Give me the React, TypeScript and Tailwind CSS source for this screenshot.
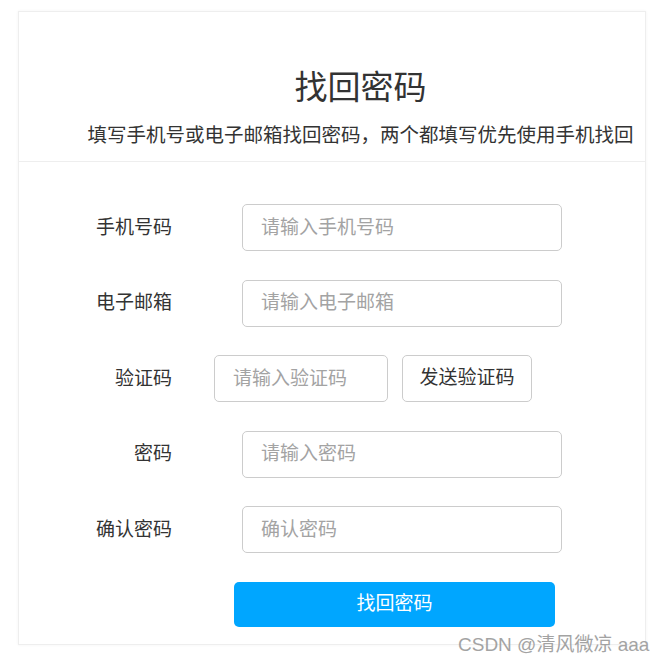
import React from "react";

const fields = [
  { label: "手机号码", placeholder: "请输入手机号码", type: "text" },
  { label: "电子邮箱", placeholder: "请输入电子邮箱", type: "text" },
];

const passFields = [
  { label: "密码", placeholder: "请输入密码", type: "password" },
  { label: "确认密码", placeholder: "确认密码", type: "password" },
];

function Field({ label, placeholder, type }: { label: string; placeholder: string; type: string }) {
  return (
    <div className="flex items-center">
      <label className="w-[100px] text-right text-[19px] leading-[26px] text-[#333]">{label}</label>
      <input
        type={type}
        placeholder={placeholder}
        className="ml-[70px] h-[47px] w-[320px] rounded-[5px] border border-[#cccccc] bg-white px-[18px] text-[19px] text-[#333] outline-none placeholder:text-[#a3a3a3]"
      />
    </div>
  );
}

export default function App() {
  return (
    <div className="relative min-h-[654px] w-full bg-white font-['Liberation_Sans','Noto_Sans_CJK_SC',sans-serif]">
      <div className="ml-[18px] mt-[11px] h-[634px] w-[628px] border border-[#eeeeee] bg-white shadow-[0_0_3px_rgba(0,0,0,0.05)]">
        <div className="flex flex-col items-center border-b border-[#eeeeee] pb-[12px] pl-[57px] pt-[56px]">
          <h1 className="text-[33px] leading-[40px] text-[#333]">找回密码</h1>
          <p className="mt-[13px] text-[19.5px] leading-[28px] text-[#333]">
            填写手机号或电子邮箱找回密码，两个都填写优先使用手机找回
          </p>
        </div>

        <form className="flex flex-col gap-[28.5px] pl-[53px] pt-[42px]" onSubmit={(e) => e.preventDefault()}>
          {fields.map((f) => (
            <Field key={f.label} {...f} />
          ))}

          <div className="flex items-center">
            <label className="w-[100px] text-right text-[19px] leading-[26px] text-[#333]">验证码</label>
            <input
              type="text"
              placeholder="请输入验证码"
              className="ml-[42px] h-[47px] w-[174px] rounded-[5px] border border-[#cccccc] bg-white px-[18px] text-[19px] text-[#333] outline-none placeholder:text-[#a3a3a3]"
            />
            <button
              type="button"
              className="ml-[14px] h-[47px] w-[130px] rounded-[5px] border border-[#cccccc] bg-white text-[19px] text-[#333]"
            >
              发送验证码
            </button>
          </div>

          {passFields.map((f) => (
            <Field key={f.label} {...f} />
          ))}

          <div className="flex">
            <button
              type="submit"
              className="ml-[162px] h-[45px] w-[321px] rounded-[5px] bg-[#00a6ff] text-[19px] text-white"
            >
              找回密码
            </button>
          </div>
        </form>
      </div>

      <span className="absolute left-[458px] top-[622px] text-[19px] leading-[24px] text-[#9a9a9a] opacity-90">
        CSDN @清风微凉 aaa
      </span>
    </div>
  );
}
